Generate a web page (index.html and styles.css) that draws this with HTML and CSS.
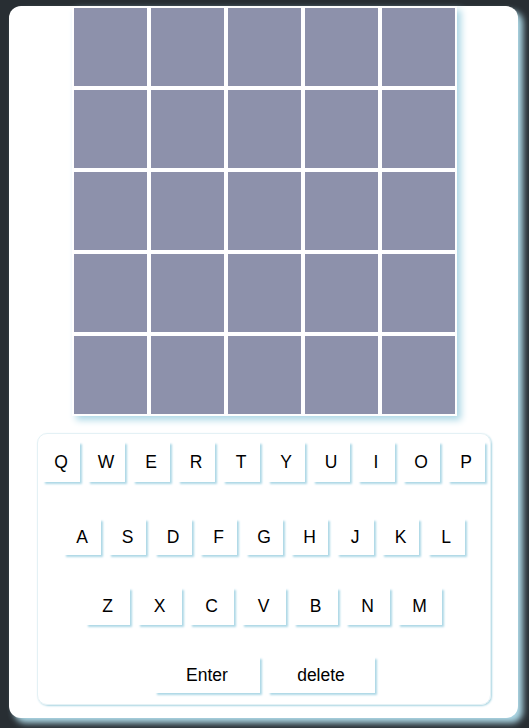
FILE: index.html
```html
<!DOCTYPE html>
<html>
<head>
<meta charset="utf-8">
<link rel="stylesheet" href="styles.css">
</head>
<body>
<div class="app">
  <div class="board">
    <div class="cell"></div><div class="cell"></div><div class="cell"></div><div class="cell"></div><div class="cell"></div>
    <div class="cell"></div><div class="cell"></div><div class="cell"></div><div class="cell"></div><div class="cell"></div>
    <div class="cell"></div><div class="cell"></div><div class="cell"></div><div class="cell"></div><div class="cell"></div>
    <div class="cell"></div><div class="cell"></div><div class="cell"></div><div class="cell"></div><div class="cell"></div>
    <div class="cell"></div><div class="cell"></div><div class="cell"></div><div class="cell"></div><div class="cell"></div>
  </div>
  <div class="keyboard">
    <div class="row row1">
      <div class="key">Q</div><div class="key">W</div><div class="key">E</div><div class="key">R</div><div class="key">T</div><div class="key">Y</div><div class="key">U</div><div class="key">I</div><div class="key">O</div><div class="key">P</div>
    </div>
    <div class="row row2">
      <div class="key">A</div><div class="key">S</div><div class="key">D</div><div class="key">F</div><div class="key">G</div><div class="key">H</div><div class="key">J</div><div class="key">K</div><div class="key">L</div>
    </div>
    <div class="row row3">
      <div class="key">Z</div><div class="key">X</div><div class="key">C</div><div class="key">V</div><div class="key">B</div><div class="key">N</div><div class="key">M</div>
    </div>
    <div class="row row4">
      <div class="key enter">Enter</div><div class="key del">delete</div>
    </div>
  </div>
</div>
</body>
</html>
```
FILE: styles.css
```css
html, body {
  margin: 0;
  padding: 0;
  background: #282e33;
}
body {
  padding: 6px 0 0 9px;
  height: 728px;
  box-sizing: border-box;
  overflow: hidden;
  font-family: "Liberation Sans", Arial, sans-serif;
}
.app {
  width: 509px;
  height: 712px;
  background: #ffffff;
  border-radius: 12px;
  box-shadow: 5px 5px 6px #add8e6;
  display: flex;
  flex-direction: column;
  align-items: center;
}
.board {
  background: #ffffff;
  padding: 2px;
  display: grid;
  grid-template-columns: repeat(5, 73px);
  grid-auto-rows: 78px;
  gap: 4px 4px;
  box-shadow: 4px 4px 7px #add8e6;
  margin-left: 1px;
}
.cell {
  background: #8d91ab;
}
.keyboard {
  margin-top: 17px;
  width: 452px;
  height: 262px;
  border: 1px solid #e4f1f5;
  border-radius: 10px;
  box-shadow: 1px 1px 2px #a9d5e2;
  box-sizing: content-box;
  padding-top: 8px;
  display: flex;
  flex-direction: column;
  align-items: center;
}
.row {
  display: flex;
  justify-content: center;
  gap: 8px;
}
.key {
  background: #ffffff;
  box-shadow: 2px 2px 2px #add8e6;
  color: #000;
  font-size: 17.5px;
  display: flex;
  align-items: center;
  justify-content: center;
}
.row1 .key { width: 37px; height: 40px; }
.row2 { margin-top: 37px; gap: 8.5px; margin-left: 1px; }
.row2 .key { width: 37px; height: 36px; }
.row3 { margin-top: 33px; gap: 8px; }
.row3 .key { width: 44px; height: 37px; }
.row4 { margin-top: 32px; gap: 8px; margin-left: 2px; }
.row4 .key { height: 36px; }
.enter { width: 105px; }
.del { width: 107px; }
```
